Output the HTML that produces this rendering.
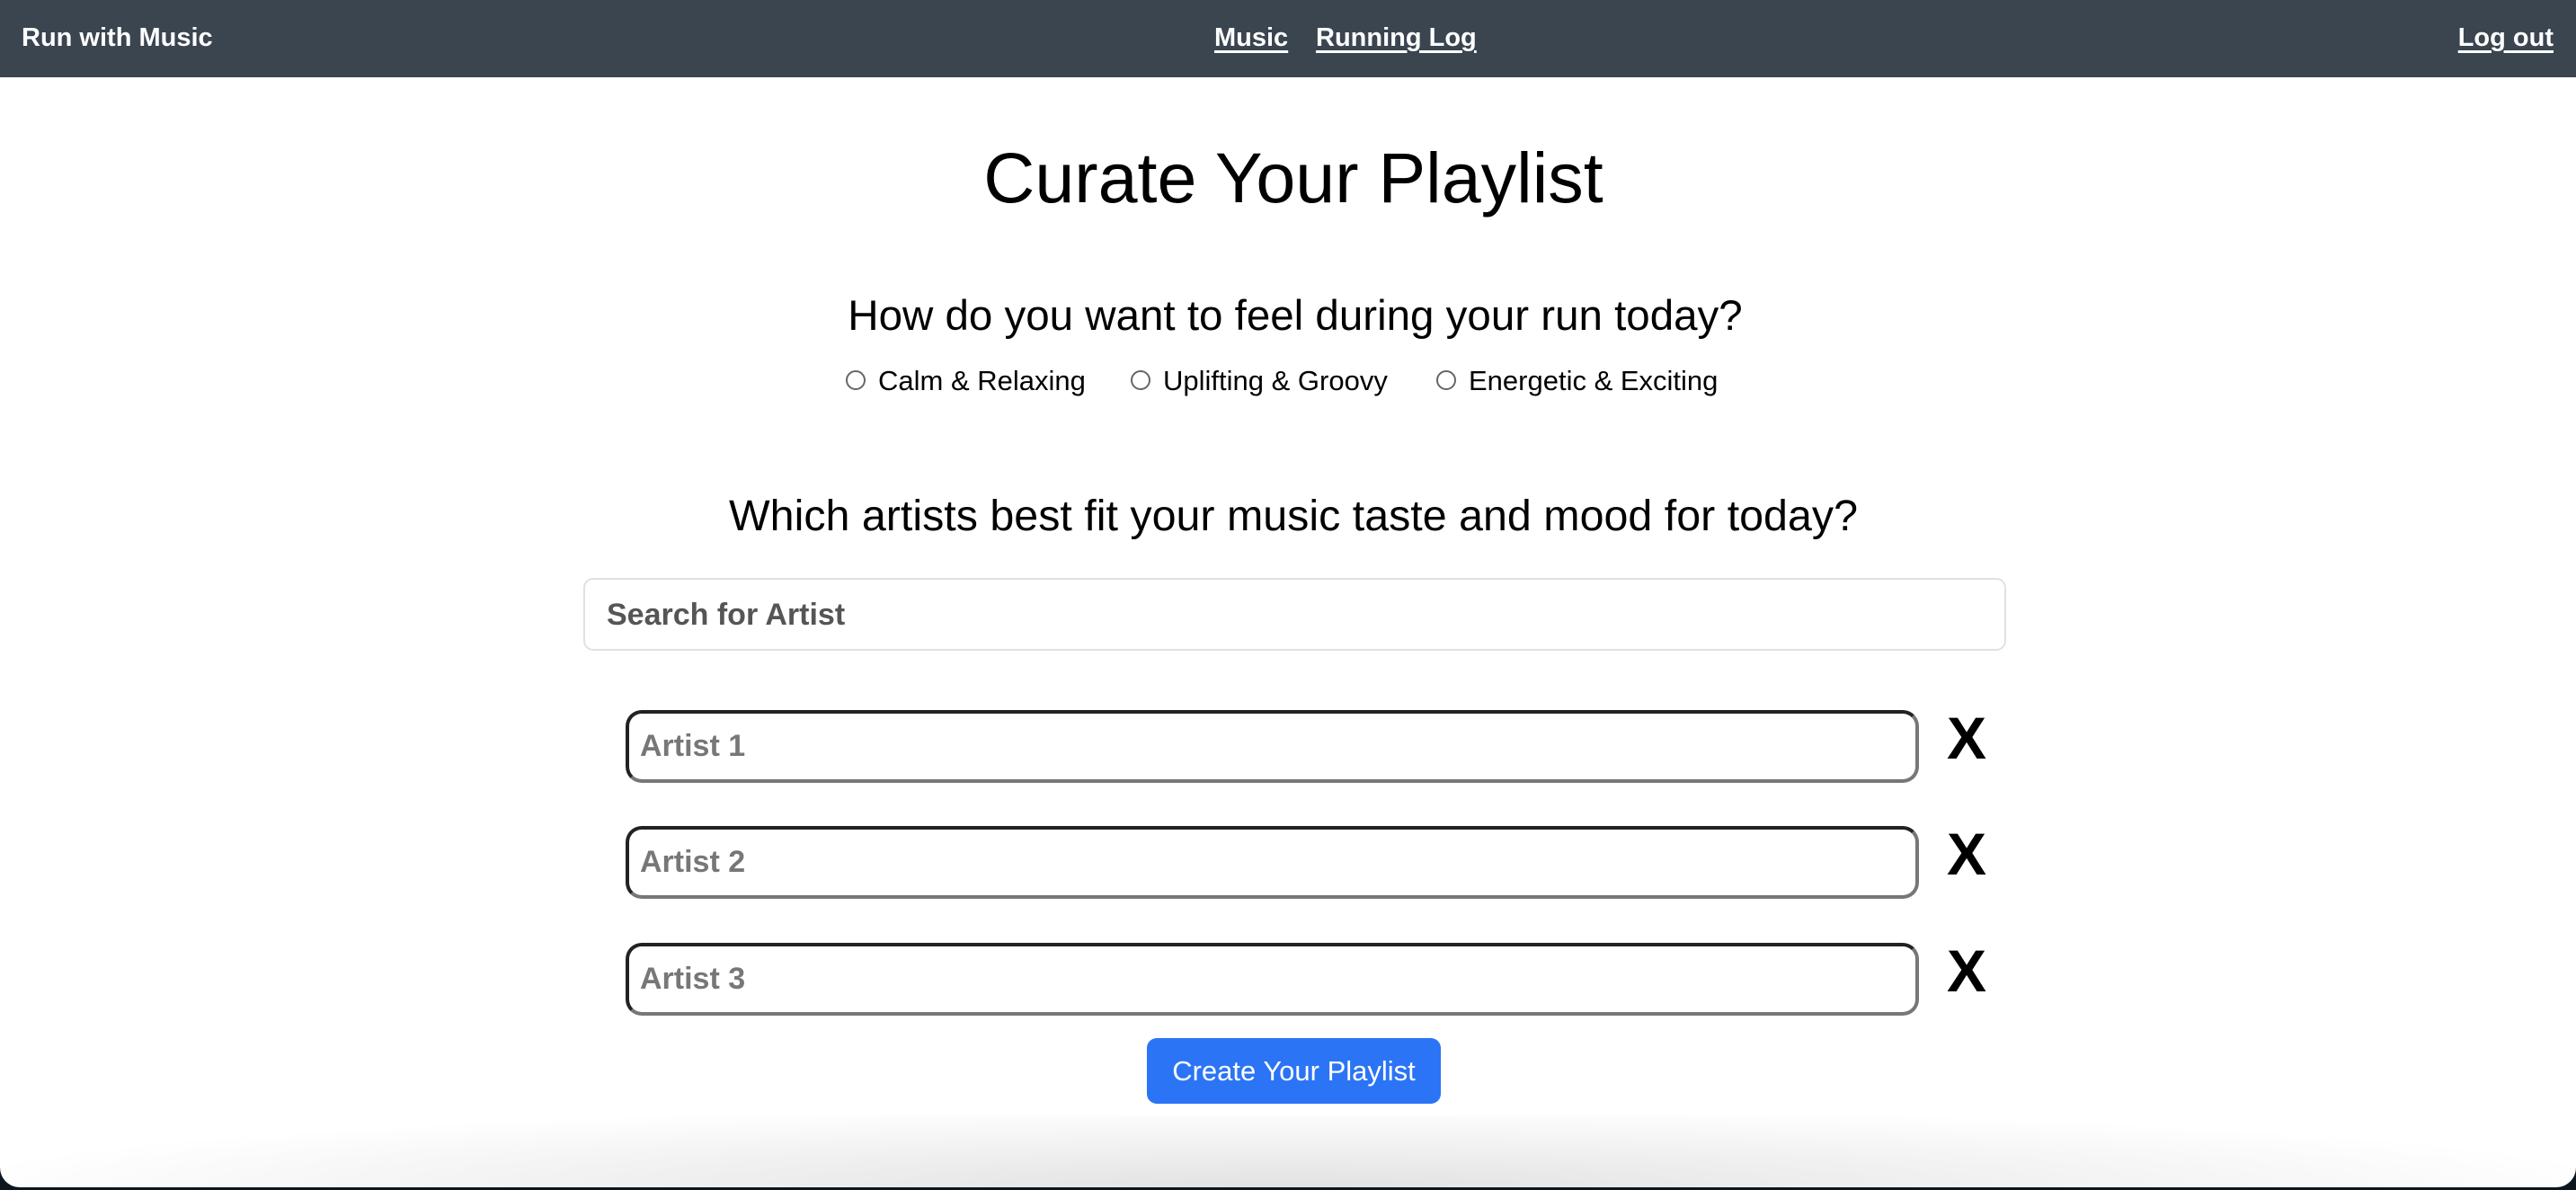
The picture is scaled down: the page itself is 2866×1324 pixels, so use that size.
<!DOCTYPE html>
<html><head><style>
html,body{margin:0;padding:0;width:2866px;height:1324px;overflow:hidden;background:#0d1620;}
.win{position:absolute;left:0;top:0;width:2866px;height:1321px;background:#fff;border-radius:0 0 22px 22px;overflow:hidden;font-family:"Liberation Sans",sans-serif;}
.nav{position:absolute;left:0;top:0;width:2866px;height:86px;background:#3a4550;color:#fff;font-weight:bold;font-size:29px;}
.nav span{position:absolute;top:26px;white-space:nowrap;}
.nav u{text-decoration-thickness:3px;text-underline-offset:5px;}
.c{position:absolute;left:0;width:2866px;text-align:center;white-space:nowrap;}
.shade{position:absolute;left:0;bottom:0;width:2866px;height:80px;background:radial-gradient(ellipse 1500px 90px at 50% 100%,#e2e2e2,rgba(255,255,255,0));}
.radio{position:absolute;top:412px;width:22px;height:22px;border:2px solid #666;border-radius:50%;box-sizing:border-box;}
.rl{position:absolute;top:406px;font-size:31px;white-space:nowrap;}
.search{position:absolute;left:649px;top:643px;width:1583px;height:81px;border:2px solid #e0e0e6;border-radius:11px;box-sizing:border-box;}
.search span{position:absolute;left:24px;top:20px;font-size:34px;font-weight:bold;color:#555;}
.art{position:absolute;left:696px;width:1439px;height:81px;border:4px solid #222;border-bottom-color:#777;border-right-color:#777;border-radius:18px;box-sizing:border-box;}
.art span{position:absolute;left:12px;top:17px;font-size:34px;font-weight:bold;color:#777;}
.x{position:absolute;left:2166px;font-size:66px;font-weight:bold;color:#000;}
.btn{position:absolute;left:1276px;top:1155px;width:327px;height:73px;background:#2b74f5;border-radius:11px;color:#fff;font-size:31px;text-align:center;line-height:73px;}
</style></head><body>
<div class="win">
<div class="nav">
<span style="left:24px">Run with Music</span>
<span style="left:1351px"><u>Music</u></span>
<span style="left:1464px"><u>Running Log</u></span>
<span style="right:25px"><u>Log out</u></span>
</div>
<div class="c" style="top:152px;font-size:79px;left:6px">Curate Your Playlist</div>
<div class="c" style="top:324px;font-size:47.5px;left:8px">How do you want to feel during your run today?</div>
<div class="radio" style="left:941px"></div><div class="rl" style="left:977px">Calm &amp; Relaxing</div>
<div class="radio" style="left:1258px"></div><div class="rl" style="left:1294px">Uplifting &amp; Groovy</div>
<div class="radio" style="left:1598px"></div><div class="rl" style="left:1634px">Energetic &amp; Exciting</div>
<div class="c" style="top:546px;font-size:48.4px;left:6px">Which artists best fit your music taste and mood for today?</div>
<div class="search"><span>Search for Artist</span></div>
<div class="art" style="top:790px"><span>Artist 1</span></div><div class="x" style="top:783px">X</div>
<div class="art" style="top:919px"><span>Artist 2</span></div><div class="x" style="top:912px">X</div>
<div class="art" style="top:1049px"><span>Artist 3</span></div><div class="x" style="top:1042px">X</div>
<div class="btn">Create Your Playlist</div>
<div class="shade"></div>
</div>
</body></html>
